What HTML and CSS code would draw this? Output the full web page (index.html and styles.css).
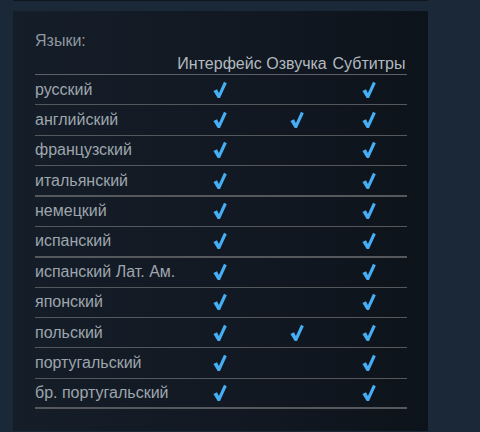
FILE: index.html
```html
<!DOCTYPE html>
<html lang="ru">
<head>
<meta charset="utf-8">
<link rel="stylesheet" href="styles.css">
</head>
<body>
<svg width="0" height="0" class="defs" aria-hidden="true">
  <symbol id="check" viewBox="0 0 14 18">
    <path d="M0.4 10 L4 8.3 L5.9 11.9 L11 0.8 L13.8 2.3 L7 16.9 L4.7 16.9 Z"/>
  </symbol>
</svg>
<div class="page">
  <div class="prev-block"></div>
  <section class="panel">
    <div class="caption">Языки:</div>
    <table class="langs">
      <thead>
        <tr><th class="lang-col"></th><th class="c1">Интерфейс</th><th class="c2">Озвучка</th><th class="c3">Субтитры</th></tr>
      </thead>
      <tbody>
        <tr><td class="name">русский</td><td class="chk"><svg class="ic"><use href="#check"/></svg></td><td class="chk"></td><td class="chk"><svg class="ic"><use href="#check"/></svg></td></tr>
        <tr><td class="name">английский</td><td class="chk"><svg class="ic"><use href="#check"/></svg></td><td class="chk"><svg class="ic"><use href="#check"/></svg></td><td class="chk"><svg class="ic"><use href="#check"/></svg></td></tr>
        <tr><td class="name">французский</td><td class="chk"><svg class="ic"><use href="#check"/></svg></td><td class="chk"></td><td class="chk"><svg class="ic"><use href="#check"/></svg></td></tr>
        <tr class="thick"><td class="name">итальянский</td><td class="chk"><svg class="ic"><use href="#check"/></svg></td><td class="chk"></td><td class="chk"><svg class="ic"><use href="#check"/></svg></td></tr>
        <tr><td class="name">немецкий</td><td class="chk"><svg class="ic"><use href="#check"/></svg></td><td class="chk"></td><td class="chk"><svg class="ic"><use href="#check"/></svg></td></tr>
        <tr class="thick"><td class="name">испанский</td><td class="chk"><svg class="ic"><use href="#check"/></svg></td><td class="chk"></td><td class="chk"><svg class="ic"><use href="#check"/></svg></td></tr>
        <tr><td class="name">испанский Лат. Ам.</td><td class="chk"><svg class="ic"><use href="#check"/></svg></td><td class="chk"></td><td class="chk"><svg class="ic"><use href="#check"/></svg></td></tr>
        <tr><td class="name">японский</td><td class="chk"><svg class="ic"><use href="#check"/></svg></td><td class="chk"></td><td class="chk"><svg class="ic"><use href="#check"/></svg></td></tr>
        <tr><td class="name">польский</td><td class="chk"><svg class="ic"><use href="#check"/></svg></td><td class="chk"><svg class="ic"><use href="#check"/></svg></td><td class="chk"><svg class="ic"><use href="#check"/></svg></td></tr>
        <tr><td class="name">португальский</td><td class="chk"><svg class="ic"><use href="#check"/></svg></td><td class="chk"></td><td class="chk"><svg class="ic"><use href="#check"/></svg></td></tr>
        <tr class="thick"><td class="name">бр. португальский</td><td class="chk"><svg class="ic"><use href="#check"/></svg></td><td class="chk"></td><td class="chk"><svg class="ic"><use href="#check"/></svg></td></tr>
      </tbody>
    </table>
  </section>
</div>
</body>
</html>
```

FILE: styles.css
```css
html, body {
  margin: 0;
  padding: 0;
  background: #1b2838;
  height: 100%;
  overflow: hidden;
}
.defs {
  position: absolute;
  width: 0;
  height: 0;
}
.page {
  padding-left: 13px;
  width: 415px;
  font-family: "Liberation Sans", Arial, sans-serif;
}
.prev-block {
  height: 1px;
  background: #0f161e;
  margin-bottom: 10px;
}
.panel {
  height: 420px;
  box-sizing: border-box;
  padding: 21px 21px 0 22px;
  background: linear-gradient(to right, #151d28 0%, #111822 60%, #0d131a 100%);
}
.caption {
  font-size: 16px;
  line-height: 18px;
  color: #8f98a0;
  margin-bottom: 5px;
}
.langs {
  width: 372px;
  border-collapse: collapse;
  table-layout: fixed;
  font-size: 16px;
}
.langs th {
  font-weight: normal;
  color: #b2b9bf;
  white-space: nowrap;
  text-align: center;
  line-height: 18px;
  padding: 0 0 1px;
  border-bottom: 1px solid #5b6066;
}
.langs .lang-col { width: 142px; }
.langs .c1 { width: 85px; }
.langs .c2 { width: 69px; }
.langs .c3 { width: 76px; }
.langs td {
  height: 30.36px;
  padding: 0;
  border-bottom: 1px solid #53585d;
  box-sizing: border-box;
}
.langs tr.thick td {
  border-bottom: 2px solid #55595e;
}
.langs td.name {
  color: #9ea6ad;
  white-space: nowrap;
  line-height: 18px;
}
.langs td.chk {
  text-align: center;
  line-height: 0;
}
.ic {
  width: 14px;
  height: 18px;
  fill: #46aef4;
  vertical-align: middle;
}
```
